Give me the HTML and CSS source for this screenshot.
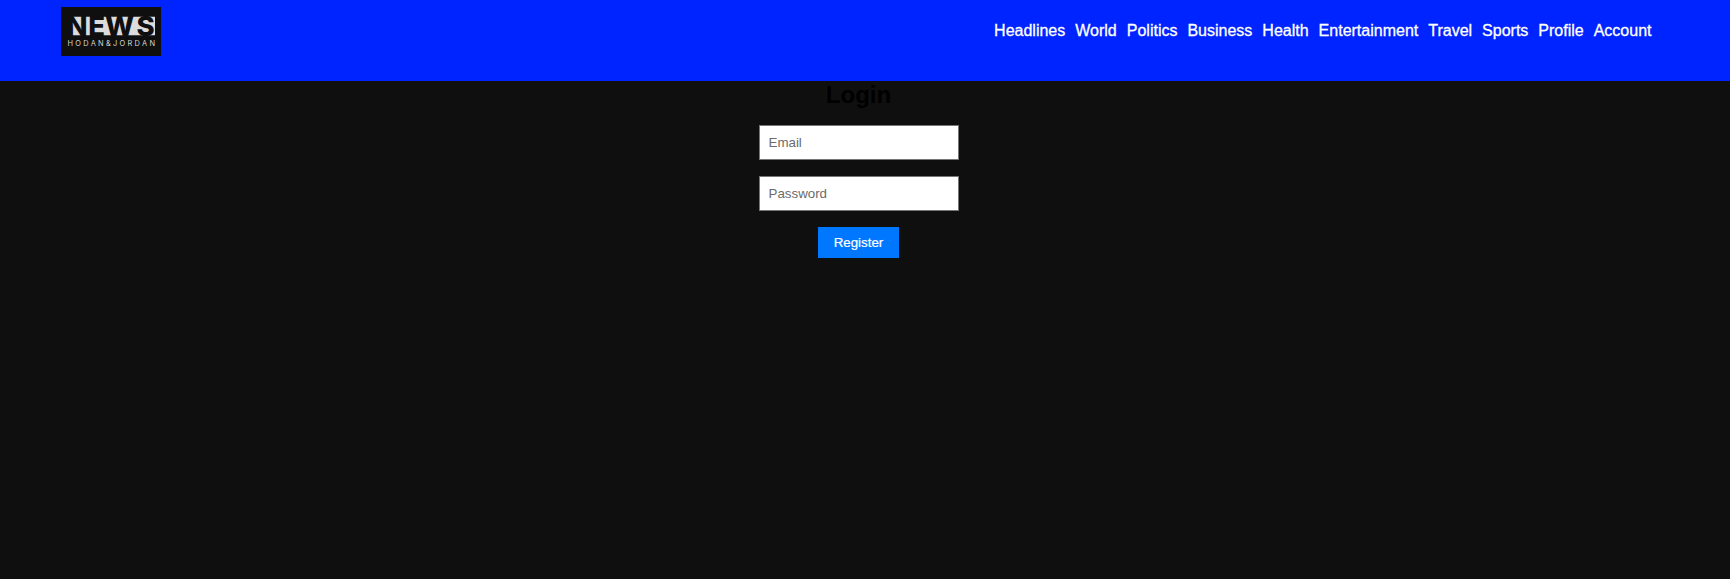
FILE: index.html
```
<!DOCTYPE html>
<html lang="en">
<head>
<meta charset="utf-8">
<title>News</title>
<link rel="stylesheet" href="styles.css">
</head>
<body>
<header class="header">
  <svg class="logo" width="100" height="49" viewBox="0 0 100 49" role="img" aria-label="News Hodan&amp;Jordan">
    <rect width="100" height="49" fill="#0f0f0f"/>
    <rect x="11" y="9" width="83" height="20" fill="#dcdcdc"/>
    <path d="M7 9.5H94M7 28.5H94" stroke="#444" stroke-width="1"/>
    <text class="logo-name" x="5.5 27.3 44 75.5" y="29">NEWS</text>
    <text class="logo-tag" x="6.5" y="38.8" textLength="87.5" lengthAdjust="spacing">HODAN&amp;JORDAN</text>
  </svg>
  <nav class="nav">
    <a>Headlines</a>
    <a>World</a>
    <a>Politics</a>
    <a>Business</a>
    <a>Health</a>
    <a>Entertainment</a>
    <a>Travel</a>
    <a>Sports</a>
    <a>Profile</a>
    <a>Account</a>
  </nav>
</header>
<main class="login">
  <h2 class="title">Login</h2>
  <form class="form">
    <input class="field" type="email" placeholder="Email">
    <input class="field" type="password" placeholder="Password">
    <button class="submit" type="button">Register</button>
  </form>
</main>
</body>
</html>
```
FILE: styles.css
```
body {
  margin: 0;
  background: #0f0f0f;
  font-family: "Liberation Sans", Arial, sans-serif;
}
.header {
  display: flex;
  justify-content: space-between;
  align-items: flex-start;
  box-sizing: border-box;
  height: 81px;
  padding: 7px 78.5px 0 61px;
  background: #0024ff;
}
.logo {
  display: block;
}
.logo-name {
  font: 800 27.5px Inter, sans-serif;
  fill: #0f0f0f;
}
.logo-tag {
  font: 400 7.4px Inter, sans-serif;
  fill: #d8d5cc;
}
.nav {
  display: flex;
  gap: 10px;
  padding-top: 15px;
  font-size: 16px;
  line-height: 18px;
  color: #fff;
  -webkit-text-stroke: 0.3px #fff;
}
.login {
  display: flex;
  flex-direction: column;
  align-items: center;
  width: 199px;
  margin-left: 759px;
}
.title {
  margin: 0 0 16px;
  font-size: 24px;
  line-height: 28px;
  color: #000;
}
.form {
  display: flex;
  flex-direction: column;
  gap: 16px;
  width: 199px;
}
.field {
  box-sizing: border-box;
  width: 200px;
  height: 35px;
  padding: 8px 8.5px;
  border: 1px solid #767676;
  border-radius: 0;
  background: #fff;
  font: 13.333px "Liberation Sans", Arial, sans-serif;
}
.field::placeholder {
  color: #6b6b6b;
}
.submit {
  align-self: center;
  width: 81px;
  height: 31px;
  padding: 0;
  border: 0;
  background: #0077ff;
  color: #fff;
  font: 13.333px "Liberation Sans", Arial, sans-serif;
  -webkit-text-stroke: 0.2px #fff;
}
```
